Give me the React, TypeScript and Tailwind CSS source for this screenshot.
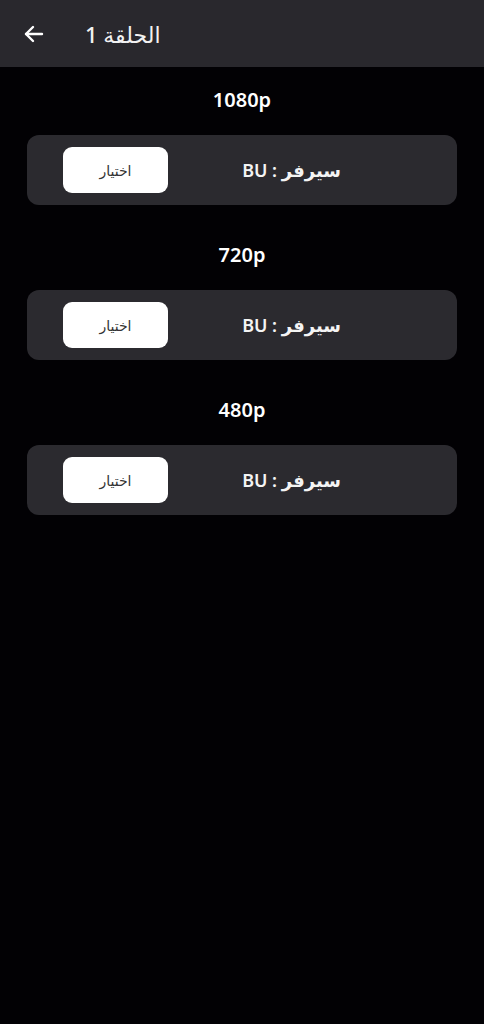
import React from "react";

const qualities = ["1080p", "720p", "480p"];

export default function App() {
  return (
    <div
      className="min-h-[1024px] w-full bg-[#020104] text-white"
      style={{ fontFamily: '"Noto Sans", "DejaVu Sans", sans-serif' }}
    >
      <header className="flex h-[67px] items-center bg-[#29282d] pl-[22px]">
        <svg width="24" height="24" viewBox="0 0 24 24" fill="none" stroke="white" strokeWidth="2.4" strokeLinecap="round" strokeLinejoin="round">
          <path d="M20 12H4" />
          <path d="M11 5l-7 7 7 7" />
        </svg>
        <div dir="rtl" className="ml-[39px] text-[22px] font-medium leading-none text-[#f2f2f2]">
          الحلقة 1
        </div>
      </header>
      <main className="flex flex-col pt-[21px]">
        {qualities.map((q) => (
          <section key={q} className="mb-[38px] flex flex-col items-center">
            <div className="h-[24px] text-[20px] font-semibold leading-[24px]">{q}</div>
            <div className="mt-[23px] flex h-[70px] w-[430px] items-center justify-between rounded-[12px] bg-[#2b2a2f] pl-[36px] pr-[116px]">
              <button className="flex h-[46px] w-[105px] items-center justify-center rounded-[9px] bg-white text-[14px] text-[#333]" dir="rtl">
                اختيار
              </button>
              <div dir="rtl" className="text-[18px] font-semibold text-[#f4f4f4]">
                سيرفر : BU
              </div>
            </div>
          </section>
        ))}
      </main>
    </div>
  );
}
